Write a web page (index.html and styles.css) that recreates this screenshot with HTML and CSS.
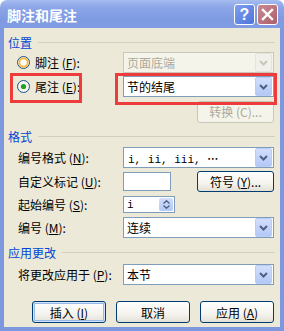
FILE: index.html
```html
<!DOCTYPE html>
<html lang="zh-CN">
<head>
  <meta charset="UTF-8" />
  <title>脚注和尾注</title>
  <link rel="stylesheet" href="styles.css">
</head>
<body>
  <div class="window">
    <div class="titlebar">
      <span class="title">脚注和尾注</span>
      <span class="cap-btn help">?</span>
      <span class="cap-btn close">
        <svg width="13" height="13" viewBox="0 0 13 13"><path d="M2 2 L11 11 M11 2 L2 11" stroke="#fff" stroke-width="2.4" stroke-linecap="square"/></svg>
      </span>
    </div>

    <div class="client">
      <!-- 位置 -->
      <div class="group-title first"><span>位置</span></div>
      <div class="row r-foot">
        <label class="label radio-label">
          <svg class="radio" width="13" height="13" viewBox="0 0 13 13">
            <circle cx="6.5" cy="6.5" r="6" fill="#fff" stroke="#1C5180"/>
            <circle cx="6.5" cy="6.5" r="4.2" fill="none" stroke="#F9B83F" stroke-width="2"/>
          </svg>
          <span>脚注 (<u>F</u>):</span>
        </label>
        <div class="combo disabled">
          <span>页面底端</span>
          <span class="arrow"><svg width="9" height="6" viewBox="0 0 9 6"><path d="M1 1 L4.5 4.5 L8 1" fill="none" stroke="#C9C7BA" stroke-width="2"/></svg></span>
        </div>
      </div>
      <div class="row r-end">
        <label class="label radio-label">
          <svg class="radio" width="13" height="13" viewBox="0 0 13 13">
            <circle cx="6.5" cy="6.5" r="6" fill="#F4F3EE" stroke="#1C5180"/>
            <circle cx="6.5" cy="6.5" r="2.6" fill="#21A121"/>
          </svg>
          <span>尾注 (<u>E</u>):</span>
        </label>
        <div class="combo">
          <span>节的结尾</span>
          <span class="arrow"><svg width="9" height="6" viewBox="0 0 9 6"><path d="M1 1 L4.5 4.5 L8 1" fill="none" stroke="#4D6185" stroke-width="2"/></svg></span>
        </div>
      </div>
      <div class="row r-convert">
        <button class="btn wide disabled">转换 (C)...</button>
      </div>

      <!-- 格式 -->
      <div class="group-title"><span>格式</span></div>
      <div class="row r-format">
        <span class="label">编号格式 (<u>N</u>):</span>
        <div class="combo">
          <span class="mono">i, ii, iii, <span class="dots">⋯</span></span>
          <span class="arrow"><svg width="9" height="6" viewBox="0 0 9 6"><path d="M1 1 L4.5 4.5 L8 1" fill="none" stroke="#4D6185" stroke-width="2"/></svg></span>
        </div>
      </div>
      <div class="row r-custom">
        <span class="label">自定义标记 (<u>U</u>):</span>
        <div class="textbox"></div>
        <button class="btn wide strong">符号 (<u>Y</u>)...</button>
      </div>
      <div class="row r-start">
        <span class="label">起始编号 (<u>S</u>):</span>
        <div class="spin">
          <span class="mono">i</span>
          <span class="spin-btns">
            <svg width="7" height="4" viewBox="0 0 7 4"><path d="M0.5 3.5 L3.5 0.8 L6.5 3.5" fill="none" stroke="#4D6185" stroke-width="1.4"/></svg>
            <svg width="7" height="4" viewBox="0 0 7 4"><path d="M0.5 0.5 L3.5 3.2 L6.5 0.5" fill="none" stroke="#4D6185" stroke-width="1.4"/></svg>
          </span>
        </div>
      </div>
      <div class="row r-number">
        <span class="label">编号 (<u>M</u>):</span>
        <div class="combo">
          <span>连续</span>
          <span class="arrow"><svg width="9" height="6" viewBox="0 0 9 6"><path d="M1 1 L4.5 4.5 L8 1" fill="none" stroke="#4D6185" stroke-width="2"/></svg></span>
        </div>
      </div>

      <!-- 应用更改 -->
      <div class="group-title"><span>应用更改</span></div>
      <div class="row r-apply">
        <span class="label">将更改应用于 (<u>P</u>):</span>
        <div class="combo">
          <span>本节</span>
          <span class="arrow"><svg width="9" height="6" viewBox="0 0 9 6"><path d="M1 1 L4.5 4.5 L8 1" fill="none" stroke="#4D6185" stroke-width="2"/></svg></span>
        </div>
      </div>

      <div class="actions">
        <button class="btn default">插入 (<u>I</u>)</button>
        <button class="btn">取消</button>
        <button class="btn">应用 (<u>A</u>)</button>
      </div>
    </div>

    <!-- annotation boxes -->
    <div class="mark mark-radio"></div>
    <div class="mark mark-combo"></div>
  </div>
</body>
</html>
```

FILE: styles.css
```css
/* Page */
body {
  margin: 0;
  background: #fff;
}

.window {
  position: relative;
  width: 284px;
  height: 331px;
  overflow: hidden;
  display: flex;
  flex-direction: column;
  font-family: "Noto Sans CJK SC", sans-serif;
  font-size: 12px;
  color: #000;
}

/* Title bar */
.titlebar {
  height: 28px;
  flex-shrink: 0;
  display: flex;
  align-items: center;
  gap: 2px;
  padding: 1px 6px 0 7px;
  box-sizing: border-box;
  border-radius: 7px 7px 0 0;
  background: linear-gradient(#A5BDF0 0%, #8CA6E8 25%, #7E9AE2 70%, #819CE2 100%);
}

.title {
  flex: 1;
  color: #fff;
  font-weight: bold;
  font-size: 14px;
}

.cap-btn {
  width: 21px;
  height: 21px;
  box-sizing: border-box;
  border: 1px solid #fff;
  border-radius: 3px;
  display: flex;
  align-items: center;
  justify-content: center;
}

.cap-btn.help {
  background: linear-gradient(135deg, #7E9EEE, #4E74DC);
  color: #fff;
  font-family: "Liberation Sans", sans-serif;
  font-weight: bold;
  font-size: 16px;
}

.cap-btn.close {
  background: linear-gradient(135deg, #C98B93, #AD5E68);
}

/* Client area */
.client {
  flex: 1;
  background: #ECE9D8;
  border: 4px solid #7E98E0;
  border-top: none;
  padding: 0 5px 0 4px;
}

.group-title {
  display: flex;
  align-items: center;
  height: 14px;
  margin-top: 7px;
  color: #0046D5;
}

.group-title::after {
  content: "";
  flex: 1;
  height: 1px;
  margin-left: 6px;
  background: #D0D0BF;
}

.row {
  display: flex;
  align-items: center;
  height: 21px;
  margin-top: 3px;
  padding-left: 10px;
}

.label {
  width: 105px;
  flex-shrink: 0;
  white-space: nowrap;
}

.radio-label {
  display: flex;
  align-items: center;
  margin-left: -1px;
  width: 106px;
}

.radio {
  margin-right: 5px;
}

.r-convert { justify-content: flex-end; margin-top: 4px; padding-right: 1px; }
.r-format { margin-top: 4px; }
.r-start { height: 19px; }
.r-apply { margin-top: 5px; }

/* Combo boxes */
.combo {
  width: 151px;
  height: 21px;
  box-sizing: border-box;
  border: 1px solid #7F9DB9;
  background: #fff;
  display: flex;
  align-items: center;
  padding-left: 3px;
}

.combo .arrow {
  margin-left: auto;
  margin-right: 1px;
  width: 15px;
  height: 17px;
  border: 1px solid #B9CCF7;
  border-radius: 2px;
  background: linear-gradient(#D2DEFC, #B4C8F6);
  display: flex;
  align-items: center;
  justify-content: center;
}

.combo.disabled {
  border-color: #C9C7BA;
  background: #F5F4EA;
  color: #ACA899;
}

.combo.disabled .arrow {
  border-color: #E6E4DA;
  background: #F1F0EA;
}

.mono {
  font-family: "Liberation Mono", "Noto Sans CJK SC", monospace;
  font-size: 11px;
  padding-left: 1px;
}

.dots {
  font-family: "Noto Sans CJK SC", sans-serif;
  font-weight: bold;
}

/* Text box and spinner */
.textbox {
  width: 48px;
  height: 19px;
  box-sizing: border-box;
  border: 1px solid #7F9DB9;
  background: #fff;
  margin-right: 26px;
}

.spin {
  width: 52px;
  height: 17px;
  box-sizing: border-box;
  border: 1px solid #7F9DB9;
  background: #fff;
  display: flex;
  align-items: center;
  padding-left: 2px;
}

.spin-btns {
  margin-left: auto;
  margin-right: 1px;
  width: 14px;
  height: 13px;
  border-radius: 2px;
  background: linear-gradient(#D2DEFC, #B4C8F6);
  display: flex;
  flex-direction: column;
  align-items: center;
  justify-content: center;
  gap: 1px;
}

/* Buttons */
.btn {
  width: 74px;
  height: 22px;
  box-sizing: border-box;
  border: 1px solid #003C74;
  border-radius: 3px;
  background: linear-gradient(#FFFFFF 0%, #F4F3EE 60%, #E3E0D5 100%);
  font-family: "Noto Sans CJK SC", sans-serif;
  font-size: 12px;
  color: #000;
  padding: 0;
}

.btn.wide {
  width: 77px;
}

.btn.strong {
  height: 21px;
}

.btn.default {
  box-shadow: inset 0 0 0 1px #CEE7FF, inset 0 0 0 2px #98B8EA;
}

.btn.disabled {
  border-color: #C9C7BA;
  background: #F5F4EA;
  color: #ACA899;
}

.actions {
  display: flex;
  justify-content: flex-end;
  gap: 10px;
  margin-top: 16px;
  padding-right: 1px;
}

/* Red annotation boxes */
.mark {
  position: absolute;
  box-sizing: border-box;
  border: 3px solid #EE3B3B;
}

.mark-radio {
  left: 10px;
  top: 73px;
  width: 72px;
  height: 30px;
}

.mark-combo {
  left: 115px;
  top: 73px;
  width: 162px;
  height: 32px;
}
```
